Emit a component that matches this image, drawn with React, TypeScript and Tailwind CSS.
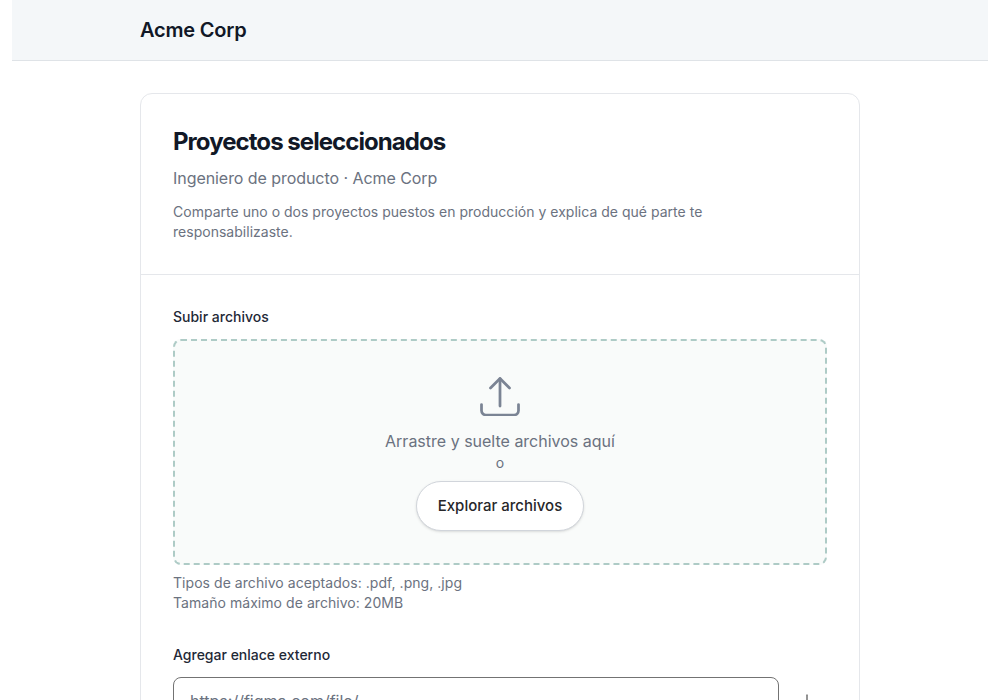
import { Plus } from 'lucide-react';

export default function App() {
  return (
    <div className="h-screen overflow-hidden bg-white font-['Inter',sans-serif]">
      {/* Header */}
      <header className="mx-3 flex h-[61px] items-center border-b border-[#dfe3e7] bg-[#f4f7f9] pl-[128px]">
        <span className="text-xl font-semibold tracking-[-0.2px] text-[#111827]">Acme Corp</span>
      </header>

      <main className="mx-auto mt-8 w-[720px] rounded-xl border border-[#e5e7eb] bg-white">
        {/* Intro */}
        <section className="border-b border-[#e5e7eb] px-8 pt-8 pb-8">
          <h1 className="text-2xl leading-8 font-bold tracking-[-0.95px] text-[#111827]">Proyectos seleccionados</h1>
          <p className="mt-2 text-base tracking-[-0.06px] text-[#6b7280]">Ingeniero de producto · Acme Corp</p>
          <p className="mt-3 max-w-xl text-sm tracking-[0.02px] text-[#6b7280]">
            Comparte uno o dos proyectos puestos en producción y explica de qué parte te responsabilizaste.
          </p>
        </section>

        <section className="px-8 pt-8">
          {/* Upload */}
          <label className="block text-sm font-medium text-[#1f2937]">Subir archivos</label>
          <div className="mt-3 flex h-[226px] flex-col items-center rounded-lg border-2 border-dashed border-[#aecbc6] bg-[#f9fbfa] pt-[35px]">
            <svg width="40" height="40" viewBox="0 0 40 40" fill="none" stroke="#7b8494" strokeWidth="2.75" strokeLinecap="round" strokeLinejoin="round">
              <path d="M20 2.5v27.5" />
              <path d="M10.5 12 20 2.5l9.5 9.5" />
              <path d="M1.5 28.5v6a4.5 4.5 0 0 0 4.5 4.5h28a4.5 4.5 0 0 0 4.5-4.5v-6" />
            </svg>
            <p className="mt-[13px] text-base text-[#6b7280]">Arrastre y suelte archivos aquí</p>
            <p className="text-sm text-[#6b7280]">o</p>
            <button className="mt-2 h-[50px] w-[168px] rounded-full border border-[#d1d5db] bg-white text-[15px] font-medium text-[#27272a] shadow-sm">
              Explorar archivos
            </button>
          </div>
          <div className="mt-2 text-sm tracking-[0.05px] text-[#6b7280]">
            <p>Tipos de archivo aceptados: .pdf, .png, .jpg</p>
            <p>Tamaño máximo de archivo: 20MB</p>
          </div>

          {/* External link */}
          <label className="mt-8 block text-sm font-medium text-[#1f2937]">Agregar enlace externo</label>
          <div className="mt-3 flex items-center gap-2">
            <input
              placeholder="https://figma.com/file/"
              className="h-12 flex-1 rounded-lg border border-[#737373] px-4 text-base outline-none placeholder:text-[#6b7280]"
            />
            <button className="flex h-10 w-10 items-center justify-center text-[#808080]">
              <Plus size={20} />
            </button>
          </div>
        </section>
      </main>
    </div>
  );
}
